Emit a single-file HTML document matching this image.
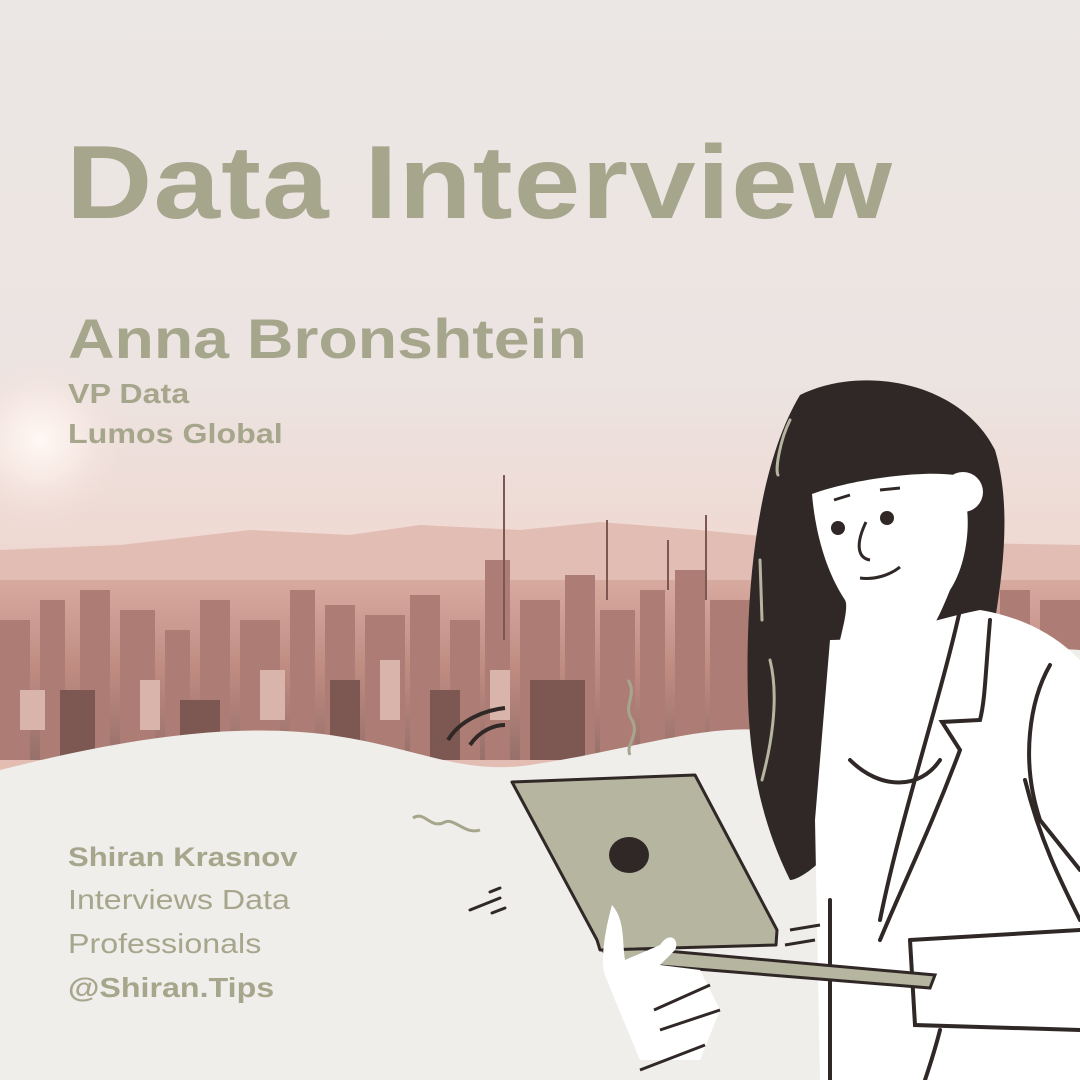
<!DOCTYPE html>
<html><head><meta charset="utf-8"><style>
html,body{margin:0;padding:0}
body{width:1080px;height:1080px;overflow:hidden;position:relative;background:#ebe6e3;font-family:"Liberation Sans",sans-serif}
.t{position:absolute;color:#a6a68c;font-weight:bold;margin:0;white-space:nowrap;transform-origin:0 0;transform:scaleX(1.15)}
</style></head><body>
<svg width="1080" height="1080" style="position:absolute;left:0;top:0">
<defs>
<linearGradient id="bg" x1="0" y1="0" x2="0" y2="1">
<stop offset="0" stop-color="#ebe7e5"/><stop offset="0.35" stop-color="#ece4e1"/><stop offset="0.5" stop-color="#efd9d3"/><stop offset="0.62" stop-color="#e6c3ba"/><stop offset="1" stop-color="#d9a69a"/></linearGradient>
<linearGradient id="city" x1="0" y1="0" x2="0" y2="1">
<stop offset="0" stop-color="#d7aaa0"/><stop offset="0.5" stop-color="#bf8b81"/><stop offset="1" stop-color="#96706a"/></linearGradient>
<radialGradient id="sun" cx="40" cy="440" r="90" gradientUnits="userSpaceOnUse"><stop offset="0" stop-color="#fff8f4"/><stop offset="0.4" stop-color="#fbeee9" stop-opacity="0.8"/><stop offset="1" stop-color="#f2dcd6" stop-opacity="0"/></radialGradient>
</defs>
<rect width="1080" height="1080" fill="url(#bg)"/>
<circle cx="40" cy="440" r="90" fill="url(#sun)"/>
<path d="M0,550 L120,545 L250,530 L350,535 L420,525 L520,530 L600,522 L700,530 L800,540 L1080,545 L1080,760 L0,760Z" fill="#e2bdb4"/>
<path d="M0,580 L1080,580 L1080,760 L0,760Z" fill="url(#city)"/>
<g fill="#ad7d75">
<rect x="0" y="620" width="30" height="140"/><rect x="40" y="600" width="25" height="160"/><rect x="80" y="590" width="30" height="170"/><rect x="120" y="610" width="35" height="150"/><rect x="165" y="630" width="25" height="130"/><rect x="200" y="600" width="30" height="160"/><rect x="240" y="620" width="40" height="140"/><rect x="290" y="590" width="25" height="170"/><rect x="325" y="605" width="30" height="155"/><rect x="365" y="615" width="40" height="145"/><rect x="410" y="595" width="30" height="165"/><rect x="450" y="620" width="30" height="140"/><rect x="485" y="560" width="25" height="200"/><rect x="520" y="600" width="40" height="160"/><rect x="565" y="575" width="30" height="185"/><rect x="600" y="610" width="35" height="150"/><rect x="640" y="590" width="25" height="170"/><rect x="675" y="570" width="30" height="190"/><rect x="710" y="600" width="40" height="160"/><rect x="1000" y="590" width="30" height="100"/><rect x="1040" y="600" width="40" height="80"/>
</g>
<g fill="#7d5853"><rect x="330" y="680" width="30" height="80"/><rect x="530" y="680" width="55" height="80"/><rect x="180" y="700" width="40" height="60"/><rect x="430" y="690" width="30" height="70"/><rect x="60" y="690" width="35" height="70"/></g>
<g fill="#d9b4ab"><rect x="20" y="690" width="25" height="40"/><rect x="140" y="680" width="20" height="50"/><rect x="260" y="670" width="25" height="50"/><rect x="380" y="660" width="20" height="60"/><rect x="490" y="670" width="20" height="50"/></g>
<g stroke="#7d5853" stroke-width="2"><line x1="504" y1="475" x2="504" y2="640"/><line x1="607" y1="520" x2="607" y2="600"/><line x1="706" y1="515" x2="706" y2="600"/><line x1="668" y1="540" x2="668" y2="590"/></g>
<path d="M0,770 C100,745 220,720 330,735 C420,748 460,775 530,765 C620,752 700,725 760,730 C850,700 950,640 1080,650 L1080,1080 L0,1080Z" fill="#efeeeb"/>
<!-- hair back -->
<path d="M800,395 C860,365 960,380 995,450 C1010,500 1005,560 995,620 L940,640 C900,700 860,780 850,820 C830,860 800,880 790,880 C760,820 750,760 748,700 C745,600 755,470 800,395Z" fill="#302826"/>
<!-- body -->
<path d="M830,640 C880,640 930,620 980,610 C1040,620 1070,650 1080,660 L1080,1080 L820,1080 L815,820Z" fill="#ffffff"/>
<g fill="none" stroke="#302826" stroke-width="4" stroke-linecap="round">
<path d="M960,610 C940,700 900,820 880,920"/><path d="M990,620 C985,680 985,700 980,720 L942,722 L960,750 C930,830 905,880 880,940"/>
<path d="M1050,665 C1030,700 1020,760 1040,820 L1080,870"/><path d="M1025,780 C1040,840 1060,880 1080,920"/>
<path d="M850,760 C880,790 920,790 940,760"/>
<path d="M910,940 L1080,930"/><path d="M910,940 L915,1025 L1080,1030"/>
<path d="M940,1030 C935,1050 930,1065 925,1080"/><path d="M830,900 L830,1080"/>
</g>
<!-- face -->
<path d="M812,494 C850,480 920,470 955,475 C975,500 970,560 950,590 C920,610 880,612 845,600 C825,570 815,530 812,494Z" fill="#ffffff"/>
<circle cx="963" cy="492" r="20" fill="#ffffff"/>
<path d="M950,590 C930,640 920,650 880,660 L840,640 C845,620 848,605 845,600Z" fill="#ffffff"/>
<circle cx="838" cy="528" r="7" fill="#302826"/><circle cx="887" cy="518" r="7" fill="#302826"/>
<path d="M834,500 L850,495 M880,490 L900,488" stroke="#302826" stroke-width="3" fill="none"/>
<path d="M866,522 C855,545 858,558 870,560" stroke="#302826" stroke-width="3" fill="none"/>
<path d="M860,578 C875,580 890,575 900,567" stroke="#302826" stroke-width="3" fill="none"/>
<path d="M790,420 C780,440 775,470 778,475 M760,560 L762,620 M770,660 C780,700 770,750 762,780" stroke="#b5b5a0" stroke-width="3" fill="none" stroke-linecap="round"/>
<!-- laptop -->
<path d="M600,945 L935,975 L930,988 L610,962Z" fill="#b5b5a0" stroke="#302826" stroke-width="3"/>
<path d="M512,782 L695,775 L777,930 L776,945 L600,950 L597,940Z" fill="#b5b5a0" stroke="#302826" stroke-width="3" stroke-linejoin="round"/>
<ellipse cx="629" cy="855" rx="20" ry="18" fill="#302826"/>
<!-- hand -->
<path d="M612,905 C605,930 600,960 605,975 L615,1000 L640,1060 L700,1060 L720,1010 L700,970 L660,965 L675,950 C680,940 670,930 660,945 L625,960 C622,940 625,920 612,905Z" fill="#ffffff"/>
<path d="M654,1010 L710,985 M660,1030 L720,1010 M640,1070 L705,1045" stroke="#302826" stroke-width="3"/>
<path d="M790,930 L820,925 M785,945 L815,940" stroke="#302826" stroke-width="3"/>
<path d="M413,818 C425,810 430,830 445,822 C455,818 465,835 480,830" stroke="#a6a68c" stroke-width="3" fill="none"/>
<path d="M470,910 L500,898 M490,892 L500,888 M492,913 L505,908" stroke="#302826" stroke-width="3" stroke-linecap="round"/>
<path d="M628,680 C638,695 622,705 632,720 C640,735 625,745 630,755" stroke="#a6a68c" stroke-width="3" fill="none"/>
<path d="M448,740 C460,720 485,710 505,708 M470,745 C480,730 495,725 505,725" stroke="#302826" stroke-width="4" fill="none"/>
</svg>
<p class="t" style="left:66px;top:124px;font-size:104px;letter-spacing:1px">Data Interview</p>
<p class="t" style="left:68px;top:306px;font-size:56px">Anna Bronshtein</p>
<p class="t" style="left:68px;top:378px;font-size:28px">VP Data</p>
<p class="t" style="left:68px;top:418px;font-size:28px">Lumos Global</p>
<p class="t" style="left:68px;top:842px;font-size:27px">Shiran Krasnov</p>
<p class="t" style="left:68px;top:884px;font-size:28px;font-weight:normal">Interviews Data</p>
<p class="t" style="left:68px;top:928px;font-size:28px;font-weight:normal">Professionals</p>
<p class="t" style="left:68px;top:972px;font-size:28px">@Shiran.Tips</p>
</body></html>
